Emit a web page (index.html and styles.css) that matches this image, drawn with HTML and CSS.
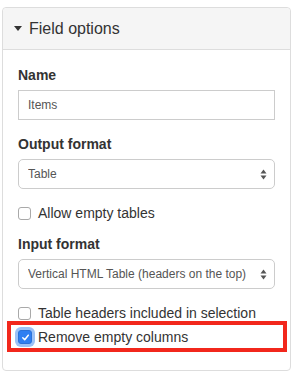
FILE: index.html
```html
<!DOCTYPE html>
<html lang="en">
<head>
  <meta charset="UTF-8" />
  <title>Field options</title>
  <link rel="stylesheet" href="styles.css">
</head>
<body>

<div class="panel">
  <div class="panel-heading">
    <span class="caret"></span>
    Field options
  </div>
  <div class="panel-body">
    <div class="form-group">
      <label>Name</label>
      <div class="form-control">Items</div>
    </div>

    <div class="form-group tight">
      <label>Output format</label>
      <div class="form-control select">
        <span>Table</span>
        <svg class="arrows" width="7" height="11" viewBox="0 0 7 11"><path d="M3.5 0.5 L6.5 4.5 L0.5 4.5 Z M3.5 10.5 L6.5 6.5 L0.5 6.5 Z" fill="#555"/></svg>
      </div>
    </div>

    <div class="checkbox first">
      <span class="box"></span>
      Allow empty tables
    </div>

    <div class="form-group tight">
      <label>Input format</label>
      <div class="form-control select">
        <span>Vertical HTML Table (headers on the top)</span>
        <svg class="arrows" width="7" height="11" viewBox="0 0 7 11"><path d="M3.5 0.5 L6.5 4.5 L0.5 4.5 Z M3.5 10.5 L6.5 6.5 L0.5 6.5 Z" fill="#555"/></svg>
      </div>
    </div>

    <div class="checkbox">
      <span class="box"></span>
      Table headers included in selection
    </div>

    <div class="highlight">
      <div class="checkbox">
        <span class="box checked">
          <svg width="9" height="9" viewBox="0 0 9 9"><path d="M1.8 4.8 L3.7 6.7 L7.3 2.2" stroke="#fff" stroke-width="1.5" fill="none" stroke-linecap="round" stroke-linejoin="round"/></svg>
        </span>
        Remove empty columns
      </div>
    </div>
  </div>
</div>

</body>
</html>
```

FILE: styles.css
```css
body {
  font-family: 'Liberation Sans', Arial, sans-serif;
  font-size: 14px;
  color: #333;
  margin: 0;
  padding: 7px 5px 0 2px;
  background: #fff;
}
.panel {
  border: 1px solid #ddd;
  border-radius: 4px;
}
.panel-heading {
  display: flex;
  align-items: center;
  height: 42px;
  box-sizing: border-box;
  padding: 0 11px;
  background: #f5f5f5;
  border-bottom: 1px solid #ddd;
  border-radius: 4px 4px 0 0;
  font-size: 16px;
}
.caret {
  width: 0;
  height: 0;
  border-left: 4px solid transparent;
  border-right: 4px solid transparent;
  border-top: 5px solid #333;
  margin-right: 7px;
}
.panel-body {
  padding: 16px 15px 18px;
}
.form-group {
  margin-bottom: 15px;
}
.form-group.tight {
  margin-bottom: 14px;
}
label {
  display: block;
  font-weight: bold;
  line-height: 19px;
  margin-bottom: 5px;
}
.form-control {
  height: 30px;
  box-sizing: border-box;
  border: 1px solid #ccc;
  padding: 0 9px;
  display: flex;
  align-items: center;
  font-size: 12px;
  color: #555;
  white-space: nowrap;
}
.form-control.select {
  justify-content: space-between;
  border-radius: 5px;
  padding-right: 7px;
}
.form-control.select span {
  overflow: hidden;
}
.arrows {
  flex-shrink: 0;
}
.checkbox {
  display: flex;
  align-items: center;
  height: 20px;
  font-size: 14px;
}
.checkbox.first {
  margin-bottom: 12px;
}
.box {
  width: 13px;
  height: 13px;
  box-sizing: border-box;
  border: 1px solid #a9a9a9;
  border-radius: 3px;
  background: #fff;
  margin-right: 7px;
  display: flex;
  align-items: center;
  justify-content: center;
}
.box.checked {
  width: 14px;
  height: 14px;
  background: #2f7ff2;
  border-color: #2b72d9;
  box-shadow: 0 0 0 3px #9cc2f7;
  margin-right: 6px;
}
.highlight {
  margin: -2px -12px 0 -11px;
  border: 4px solid #f2271c;
  padding: 2px 0 1px 7px;
}
```
